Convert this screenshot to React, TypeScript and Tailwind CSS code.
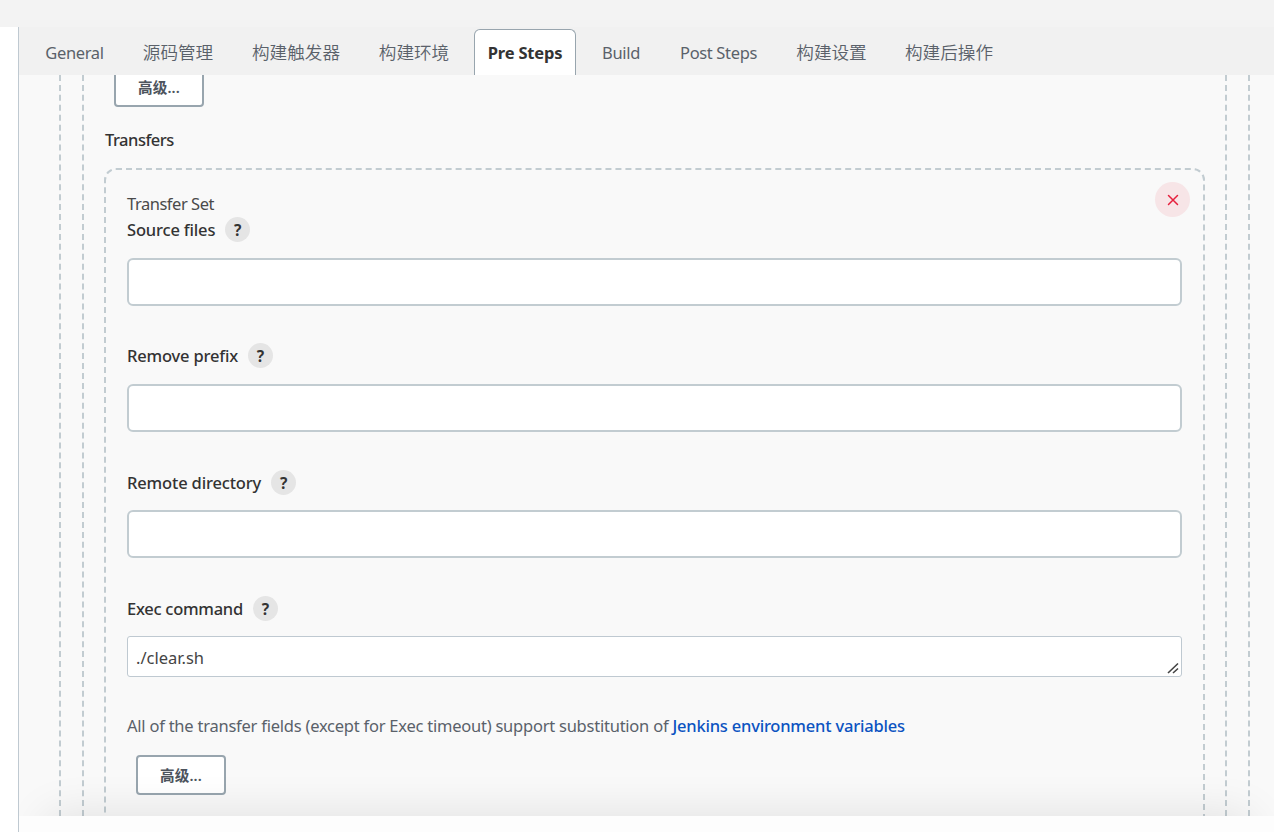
import type { ReactNode } from "react";

const TABS = [
  { label: "General", cls: "w-[86px] pr-px tracking-[-0.34px]" },
  { label: "源码管理", cls: "w-[98px]", cjk: true },
  { label: "构建触发器", cls: "w-[116px]", cjk: true },
  { label: "构建环境", cls: "w-[98px]", cjk: true },
  { label: "Pre Steps", cls: "w-[102px] tracking-[-0.2px]", active: true },
  { label: "Build", cls: "w-[68px] tracking-[-0.32px]" },
  { label: "Post Steps", cls: "w-[105px] tracking-[-0.35px]" },
  { label: "构建设置", cls: "w-[100px] pr-px", cjk: true },
  { label: "构建后操作", cls: "w-[112px]", cjk: true },
];

function Tab({ label, cls, active, cjk }: { label: string; cls: string; active?: boolean; cjk?: boolean }) {
  const tone = active
    ? "rounded-t-[6px] border border-b-0 border-[#98a5ae] bg-white font-bold text-[#333]"
    : "text-[#5a616a]";
  const face = cjk ? "text-[17.6px] font-[350]" : "text-[16.5px]";
  return (
    <button className={`flex h-[46px] shrink-0 items-center justify-center whitespace-nowrap ${tone} ${face} ${cls}`}>
      {label}
    </button>
  );
}

function AdvancedButton() {
  return (
    <button className="flex h-10 w-[90px] shrink-0 items-center justify-center rounded-[4px] border-2 border-[#98a5ae] bg-white text-[14.6px] font-semibold tracking-[0.1px] text-[#4d545d]">
      高级...
    </button>
  );
}

function Field({ label, cls, gap, children }: { label: string; cls: string; gap: string; children: ReactNode }) {
  return (
    <div>
      <div className={`flex h-[25px] items-center gap-[10px] ${gap}`}>
        <label className={`whitespace-nowrap text-[16.5px] font-medium text-[#333] ${cls}`}>{label}</label>
        <span className="flex h-[25px] w-[25px] items-center justify-center rounded-full bg-[#e5e5e5] pt-px text-[15.5px] font-bold text-[#333]">
          ?
        </span>
      </div>
      {children}
    </div>
  );
}

function TextInput() {
  return <input className="mb-[37px] block h-12 w-full rounded-[6px] border-2 border-[#c2ccd1] bg-white px-2" />;
}

export default function App() {
  return (
    <div className="flex h-[832px] w-[1274px] flex-col overflow-hidden bg-white font-['Noto_Sans','Noto_Sans_CJK_SC',sans-serif] leading-[25px]">
      <div className="h-[27px] shrink-0 bg-[#f3f3f3]" />
      <div className="ml-[18px] flex min-h-0 flex-1 flex-col border-l border-[#bfc9d1]">
        <nav className="flex h-12 shrink-0 items-end gap-[11px] bg-[#f1f1f1] pl-[13px]">
          {TABS.map((t) => (
            <Tab key={t.label} {...t} />
          ))}
        </nav>

        <main className="relative h-[741px] shrink-0 overflow-hidden bg-[#f9f9f9] pl-10 pr-6">
          <div className="h-full border-x-2 border-dashed border-[#c2ccd1] px-[21px]">
            <div className="flex h-full flex-col border-x-2 border-dashed border-[#c2ccd1] px-5">
              <div className="-mt-2 ml-[10px] flex shrink-0">
                <AdvancedButton />
              </div>
              <div className="mt-[19px] flex h-[26px] shrink-0 items-center pl-px text-[16.5px] font-medium tracking-[-0.5px] text-[#333]">
                Transfers
              </div>

              <section className="relative mt-4 h-[720px] shrink-0 rounded-t-[12px] border-2 border-b-0 border-dashed border-[#c2ccd1] px-[21px] pt-[21px]">
                <button className="absolute right-[13px] top-3 flex h-[35px] w-[35px] items-center justify-center rounded-full bg-[#f7e5e7]">
                  <svg width="12" height="12" viewBox="0 0 12 12" fill="none" stroke="#e6203d" strokeWidth="1.5" strokeLinecap="round">
                    <path d="M1.5 1.5l9 9M10.5 1.5l-9 9" />
                  </svg>
                </button>
                <div className="h-[26px] text-[16.5px] tracking-[-0.47px] text-[#4a4a4a]">Transfer Set</div>

                <Field label="Source files" cls="tracking-[-0.17px]" gap="mb-4">
                  <TextInput />
                </Field>
                <Field label="Remove prefix" cls="tracking-[-0.19px]" gap="mb-4">
                  <TextInput />
                </Field>
                <Field label="Remote directory" cls="tracking-[-0.16px]" gap="mt-[38px] mb-[15px]">
                  <TextInput />
                </Field>
                <Field label="Exec command" cls="tracking-[-0.27px]" gap="mt-[38px] mb-[15px]">
                  <div className="relative flex h-[41px] items-center rounded-[3px] border border-[#bfc9d1] bg-white px-2 pt-px text-[16.5px] text-[#444]">
                    ./clear.sh
                    <svg className="absolute bottom-[2px] right-[2px]" width="12" height="12" viewBox="0 0 12 12" stroke="#444" strokeWidth="1.6">
                      <path d="M1 11L11 1.5M6 11L11 6.5" />
                    </svg>
                  </div>
                </Field>

                <p className="mt-9 whitespace-nowrap text-[16.5px] tracking-[-0.235px] text-[#5a616a]">
                  All of the transfer fields (except for Exec timeout) support substitution of{" "}
                  <a className="font-medium tracking-[-0.2px] text-[#0b53c1]">Jenkins environment variables</a>
                </p>
                <div className="ml-[9px] mt-[17px]">
                  <AdvancedButton />
                </div>
              </section>
            </div>
          </div>
          <div className="pointer-events-none absolute left-7 right-6 top-full h-20 shadow-[0_0_46px_rgba(0,0,0,0.11)]" />
        </main>

        <div className="flex-1 bg-[#fdfdfd]" />
      </div>
    </div>
  );
}
